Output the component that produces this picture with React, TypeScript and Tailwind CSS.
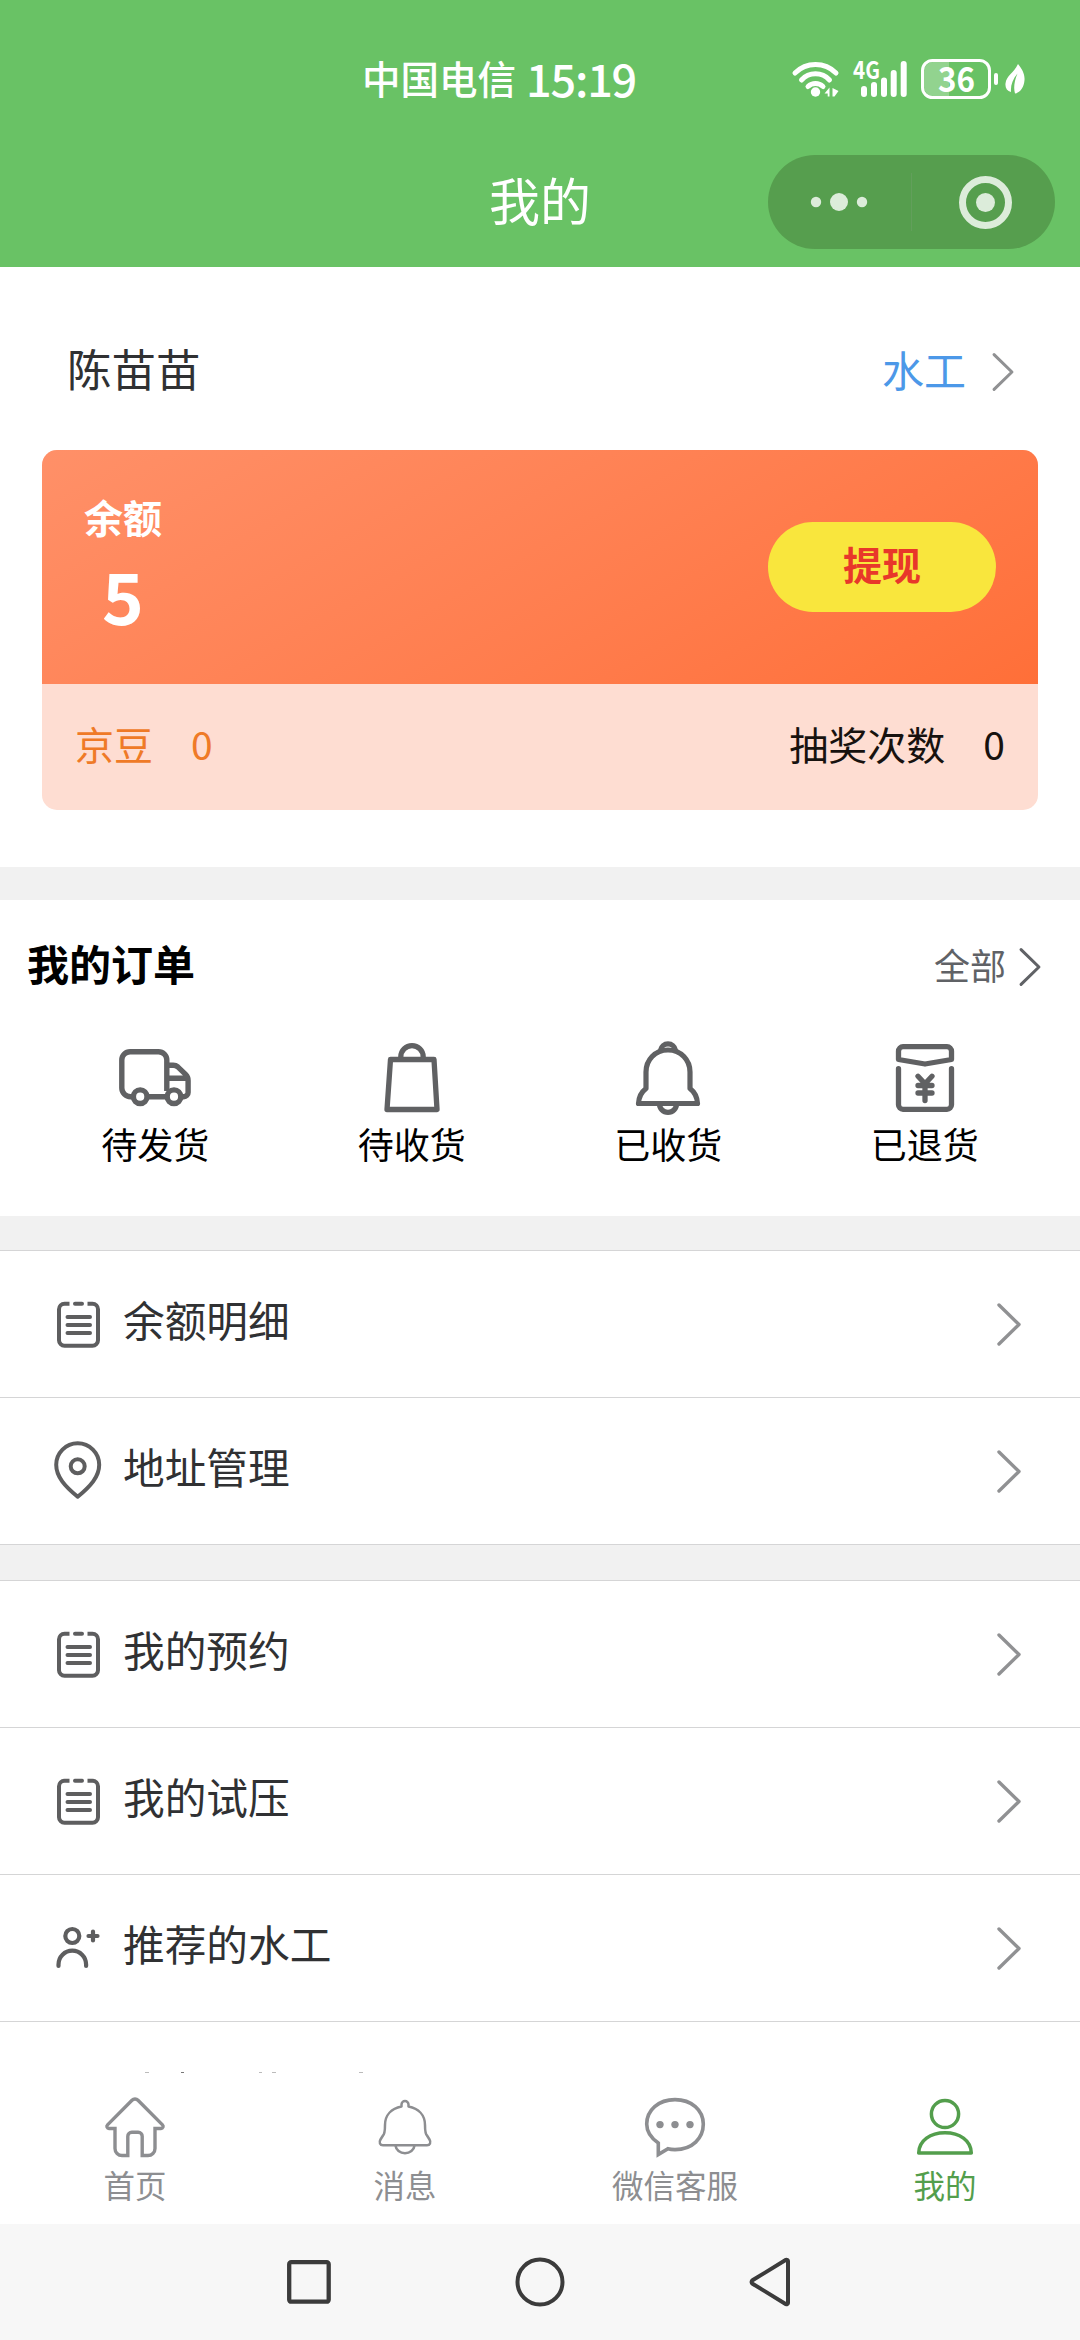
import type { ReactNode } from 'react';

type IconProps = { className?: string };

const orderTabs = [
  { label: '待发货', Icon: TruckIcon },
  { label: '待收货', Icon: BagIcon },
  { label: '已收货', Icon: OrderBellIcon },
  { label: '已退货', Icon: RefundIcon },
];

const accountLinks = [
  { label: '余额明细', Icon: NoteIcon },
  { label: '地址管理', Icon: PinIcon },
];

const serviceLinks = [
  { label: '我的预约', Icon: NoteIcon },
  { label: '我的试压', Icon: NoteIcon },
  { label: '推荐的水工', Icon: UserPlusIcon },
];

const tabs = [
  { label: '首页', Icon: HomeIcon, active: false },
  { label: '消息', Icon: BellIcon, active: false },
  { label: '微信客服', Icon: ChatIcon, active: false },
  { label: '我的', Icon: UserIcon, active: true },
];

export default function App() {
  return (
    <div className="flex h-[2340px] w-[1080px] flex-col overflow-hidden bg-white font-['Noto_Sans_CJK_SC',sans-serif] text-black">
      <header className="flex h-[267px] shrink-0 flex-col bg-[#69c265] text-white">
        <StatusBar />
        <TitleBar />
      </header>

      <main className="flex h-[1806px] shrink-0 flex-col overflow-hidden">
        <Profile />
        <div className="h-[33px] shrink-0 bg-[#f1f1f1]" />
        <Orders />
        <div className="h-[34px] shrink-0 bg-[#f1f1f1]" />
        <MenuGroup>
          {accountLinks.map(({ label, Icon }) => (
            <MenuRow key={label} label={label} icon={<Icon />} />
          ))}
        </MenuGroup>
        <div className="h-[35px] shrink-0 bg-[#f1f1f1]" />
        <MenuGroup>
          {serviceLinks.map(({ label, Icon }) => (
            <MenuRow key={label} label={label} icon={<Icon />} />
          ))}
        </MenuGroup>
        {/* Next row, cut off by the tab bar */}
        <svg className="mt-[50px] h-[1px] w-full shrink-0" viewBox="0 0 1080 1">
          <path d="M145 .5h4M259 .5h3M272 .5h4M359 .5h4" stroke="#bbb" />
          <path d="M181 .5h3" stroke="#777" />
        </svg>
      </main>

      <TabBar />
      <SystemNav />
    </div>
  );
}

function StatusBar() {
  return (
    <div className="flex h-[155px] shrink-0 pt-[50px]">
      <div className="ml-[362px] flex h-[54px] w-[418px] items-center gap-[10px] leading-none">
        <span className="text-[38.5px] font-medium">中国电信</span>
        <span className="text-[45px] font-medium tracking-[-1.2px]">15:19</span>
      </div>
      <svg className="h-[60px] w-[260px]" viewBox="780 50 260 60" fill="none" stroke="#fff" strokeLinecap="round">
        {/* wifi */}
        <path d="M795 73a29 29 0 0 1 41 0M801.500 80a19 19 0 0 1 28 0M808 86.500a11 11 0 0 1 15 0" strokeWidth="5" />
        <circle cx="815.500" cy="92" r="4.700" fill="#fff" stroke="none" />
        <path d="M824.500 93.500l5-6v9h-1.800v-3zM832.500 88l6 3-4 5.500h-2z" fill="#fff" stroke="none" />
        {/* signal */}
        <text x="853" y="79" fill="#fff" stroke="none" fontSize="24" fontWeight="700" textLength="27" lengthAdjust="spacingAndGlyphs">
          4G
        </text>
        <path d="M864 89v5M874 85v9M884 80.500v13.500M893.700 73v21M903.700 64v30" strokeWidth="6" />
        {/* battery */}
        <path d="M933 62h16v34h-16a9 9 0 0 1-9-9V71a9 9 0 0 1 9-9z" fill="#fff" fillOpacity=".28" stroke="none" />
        <rect x="922.500" y="60.500" width="67" height="37" rx="10" strokeWidth="3" />
        <text x="956.500" y="91.500" fill="#fff" stroke="none" fontSize="34" fontWeight="600" textAnchor="middle" textLength="37" lengthAdjust="spacingAndGlyphs">
          36
        </text>
        <path d="M996 75v8" strokeWidth="4" />
        {/* power saving leaf */}
        <path d="M1018 64c4 5 7 10 6.500 16-.5 7-4 12.500-9.500 13.500-1.500-5-1-12 2.500-20-5 6-7 12-6.500 18.500-4-1-6-4-5.500-8.500.8-8 8-10 12.500-19.500z" fill="#fff" stroke="none" />
      </svg>
    </div>
  );
}

function TitleBar() {
  return (
    <div className="grid h-[94px] grid-cols-[1fr_auto_1fr] items-center pr-[25px] pl-[25px]">
      <div />
      <h1 className="pb-[6px] text-[51px] leading-none">我的</h1>
      <div className="flex h-[94px] w-[287px] items-center justify-self-end rounded-full bg-[#569e4e]">
        <svg className="size-full" viewBox="768 155 287 94" fill="#dcecda">
          <circle cx="816" cy="202" r="5.200" />
          <circle cx="839" cy="202" r="9" />
          <circle cx="862" cy="202" r="5.200" />
          <path d="M911.500 173v58" stroke="#629f5b" />
          <circle cx="985.500" cy="202.500" r="23" fill="none" stroke="#dcecda" strokeWidth="7" />
          <circle cx="985.500" cy="202.500" r="9.500" />
        </svg>
      </div>
    </div>
  );
}

function Profile() {
  return (
    <section className="flex h-[600px] shrink-0 flex-col px-[42px]">
      <div className="flex h-[183px] shrink-0 items-center pt-[26px] pr-[23px] pl-[25px]">
        <span className="flex-1 pb-[6px] text-[44.5px] leading-none text-[#303133]">陈苗苗</span>
        <span className="mr-[25px] pb-[6px] text-[42px] leading-none text-[#4c98e8]">水工</span>
        <ChevronIcon className="h-[42px] w-[24px] text-[#909193]" />
      </div>

      <div className="flex h-[360px] shrink-0 flex-col overflow-hidden rounded-[15px] bg-[#feddd2]">
        <div className="flex h-[234px] items-center justify-between bg-linear-150 from-[#ff9068] to-[#ff6f38] pr-[42px] pl-[42px]">
          <div className="flex flex-col items-center font-bold text-white">
            <span className="text-[39px] leading-[54px]">余额</span>
            <span className="text-[71px] leading-[102px]">5</span>
          </div>
          <button className="h-[90px] w-[228px] rounded-full bg-[#f9e63d] pb-[7px] text-[39px] leading-none font-bold text-[#e8372a]">
            提现
          </button>
        </div>
        <div className="flex h-[126px] items-center justify-between px-[33px] pb-[7px] text-[39px] leading-none">
          <div className="flex gap-[38px] text-[#ef7a27]">
            <span>京豆</span>
            <span>0</span>
          </div>
          <div className="flex gap-[38px] text-[#17120f]">
            <span>抽奖次数</span>
            <span>0</span>
          </div>
        </div>
      </div>
    </section>
  );
}

function Orders() {
  return (
    <section className="flex h-[316px] shrink-0 flex-col px-[27px]">
      <div className="flex h-[132px] items-center justify-between">
        <h2 className="pb-[6px] text-[42px] leading-none font-bold">我的订单</h2>
        <div className="flex items-center gap-[12px] pt-[1px] pr-[11px] text-[#606266]">
          <span className="pb-[5px] text-[36px] leading-none">全部</span>
          <ChevronIcon className="h-[42px] w-[24px]" />
        </div>
      </div>
      <div className="grid grid-cols-4">
        {orderTabs.map(({ label, Icon }) => (
          <div key={label} className="flex flex-col items-center text-[#606163]">
            <Icon className="size-[90px]" />
            <span className="text-[36px] leading-[43px] text-black">{label}</span>
          </div>
        ))}
      </div>
    </section>
  );
}

function MenuGroup({ children }: { children: ReactNode }) {
  return <section className="shrink-0 border-t border-[#d5d5d6]">{children}</section>;
}

function MenuRow({ label, icon }: { label: string; icon: ReactNode }) {
  return (
    <div className="flex h-[147px] items-center border-b border-[#d5d5d6] pr-[58px] pl-[48px] text-[#5e5e5f]">
      {icon}
      <span className="ml-[15px] flex-1 pb-[9px] text-[41.7px] leading-none text-[#303133]">{label}</span>
      <ChevronIcon className="h-[47px] w-[26px] text-[#909193]" />
    </div>
  );
}

function TabBar() {
  return (
    <nav className="grid h-[151px] shrink-0 grid-cols-4 bg-white pt-[18px]">
      {tabs.map(({ label, Icon, active }) => (
        <div
          key={label}
          className={`flex flex-col items-center ${active ? 'text-[#539e4c]' : 'text-[#8d8e91]'}`}
        >
          <Icon className="size-[72px]" />
          <span className="text-[31.5px] leading-[43px]">{label}</span>
        </div>
      ))}
    </nav>
  );
}

function SystemNav() {
  return (
    <div className="flex h-[116px] shrink-0 items-center justify-center gap-[171px] bg-[#f7f7f7] text-[#3b3b3b]">
      <svg className="size-[60px]" viewBox="0 0 60 60" fill="none" stroke="currentColor" strokeWidth="4.300" strokeLinejoin="round">
        <rect x="10.200" y="10.200" width="39.500" height="39.500" rx="2" />
      </svg>
      <svg className="size-[60px]" viewBox="0 0 60 60" fill="none" stroke="currentColor" strokeWidth="4">
        <circle cx="30" cy="30" r="22.500" />
      </svg>
      <svg className="size-[60px]" viewBox="0 0 60 60" fill="none" stroke="currentColor" strokeWidth="4" strokeLinejoin="round">
        <path d="M47 9v42a1.500 1.500 0 0 1-2 1.200L11.500 31.700a2 2 0 0 1 0-3.400L45 7.800a1.500 1.500 0 0 1 2 1.200z" />
      </svg>
    </div>
  );
}

function ChevronIcon({ className }: IconProps) {
  return (
    <svg className={className} viewBox="0 0 26 47" fill="none" stroke="currentColor" strokeWidth="3.400" strokeLinecap="round" strokeLinejoin="round">
      <path d="M3 4l20 19.500L3 43" />
    </svg>
  );
}

function TruckIcon({ className }: IconProps) {
  return (
    <svg className={className} viewBox="0 0 90 90" fill="none" stroke="currentColor" strokeWidth="5.400">
      <path d="M23.500 64.700h-3a8.700 8.700 0 0 1-8.700-8.700V28a8.300 8.300 0 0 1 8.300-8.300h28.400a8.300 8.300 0 0 1 8.300 8.300v31M37 64.700h20" />
      <path d="M56.800 33.200h6.500a7 7 0 0 1 4.500 1.700l7.800 7.500a8 8 0 0 1 2.500 6v12a4.300 4.300 0 0 1-4.300 4.300h-2M56.800 46.200h21" />
      <circle cx="30.200" cy="64.700" r="6.800" />
      <circle cx="64" cy="64.700" r="6.800" />
    </svg>
  );
}

function BagIcon({ className }: IconProps) {
  return (
    <svg className={className} viewBox="0 0 90 90" fill="none" stroke="currentColor" strokeWidth="5.300" strokeLinejoin="round">
      <path d="M23.500 27.500h43.500l3 50H20zM33.800 27.500v-2.700a11.200 11.200 0 0 1 22.400 0v2.700" />
    </svg>
  );
}

function OrderBellIcon({ className }: IconProps) {
  return (
    <svg className={className} viewBox="0 0 90 90" fill="none" stroke="currentColor" strokeWidth="5.200" strokeLinejoin="round">
      <path d="M15.500 71.500h59c-.3-7-3-11.500-7.500-15V40c0-12-9-22-22-22s-22 10-22 22v16.500c-4.500 3.500-7.200 8-7.500 15z" />
      <path d="M37.500 18.200a7.600 7.600 0 0 1 15 0M36.400 71.800a8.600 8.600 0 0 0 17.200 0" />
    </svg>
  );
}

function RefundIcon({ className }: IconProps) {
  return (
    <svg className={className} viewBox="0 0 90 90" fill="none" stroke="currentColor" strokeWidth="5.300" strokeLinecap="round" strokeLinejoin="round">
      <path d="M18.500 27.500v-8.300a4.500 4.500 0 0 1 4.500-4.500h44a4.500 4.500 0 0 1 4.500 4.500v8.300L45 32zM18.500 36.700V72.800a4.500 4.500 0 0 0 4.500 4.500h44a4.500 4.500 0 0 0 4.500-4.500V36.700" />
      <path d="M38 44.200l7 7.500 7-7.500M38 53.500h14M38 61h14M45 53v15.500" />
    </svg>
  );
}

function NoteIcon() {
  return (
    <svg className="size-[60px]" viewBox="0 .8 60 60" fill="none" stroke="currentColor" strokeWidth="4">
      <path d="M21.500 10.500h-5a5.500 5.500 0 0 0-5.500 5.500v31a5.500 5.500 0 0 0 5.500 5.500h28a5.500 5.500 0 0 0 5.500-5.500V16a5.500 5.500 0 0 0-5.500-5.500h-5" />
      <path d="M27 10.500h7M19.500 23.800h22.500M19.500 31.800h22.500M19.500 39.800h22.500" strokeLinecap="round" />
    </svg>
  );
}

function PinIcon() {
  return (
    <svg className="size-[60px]" viewBox="0 1.200 60 60" fill="none" stroke="currentColor" strokeWidth="4" strokeLinejoin="round">
      <path d="M29.700 57C17 46.500 8.200 37 8.200 25a21.500 21.500 0 0 1 43 0c0 12-8.800 21.500-21.500 32z" />
      <circle cx="29.700" cy="26.500" r="7" />
    </svg>
  );
}

function UserPlusIcon() {
  return (
    <svg className="size-[60px]" viewBox="0 0 60 60" fill="none" stroke="currentColor" strokeWidth="4.200" strokeLinecap="round">
      <circle cx="24.300" cy="18" r="7" />
      <path d="M10.500 48v-1.500a13.800 13.800 0 0 1 27.600 0V48M40.500 18h9M45 13.500v9" />
    </svg>
  );
}

function HomeIcon({ className }: IconProps) {
  return (
    <svg className={className} viewBox="0 0 72 72" fill="none" stroke="currentColor" strokeWidth="3.400">
      <path d="M28.800 64.500H23a7 7 0 0 1-7-7V37.500h-6a2.100 2.100 0 0 1-1.500-3.600L33 9.200a4.200 4.200 0 0 1 6 0l24.500 24.700a2.100 2.100 0 0 1-1.500 3.600h-6v20a7 7 0 0 1-7 7h-5.800V45.300a4 4 0 0 0-4-4h-6.400a4 4 0 0 0-4 4z" />
    </svg>
  );
}

function BellIcon({ className }: IconProps) {
  return (
    <svg className={className} viewBox="0 0 72 72" fill="none" stroke="currentColor" strokeWidth="2.500" strokeLinejoin="round">
      <path d="M32.500 15.500v-2a3.500 3.500 0 0 1 7 0v2c10 2 16.500 8.500 16.500 18.500 0 6 .3 9 2 10.500l2.500 4c1.800 3 .5 5.800-2.500 5.800H14c-3 0-4.300-2.800-2.500-5.800l2.500-4c1.700-1.500 2-4.500 2-10.500 0-10 6.500-16.500 16.500-18.500z" />
      <path d="M26.500 54.500c.5 4.500 4.500 7.700 9.500 7.700s9-3.200 9.500-7.700" />
    </svg>
  );
}

function ChatIcon({ className }: IconProps) {
  return (
    <svg className={className} viewBox="0 .4 72 72" fill="none" stroke="currentColor" strokeWidth="3.600">
      <path d="M19.300 64V52.500C12 47.500 7.700 41.500 7.700 33.500 7.700 19.500 19.500 9 36 9s28.300 10.500 28.300 24.500S53.500 59 36 59c-2.500 0-4.500-.1-7-.8z" />
      <g fill="currentColor" stroke="none">
        <circle cx="21" cy="34" r="3.700" />
        <circle cx="36" cy="34" r="3.700" />
        <circle cx="51" cy="34" r="3.700" />
      </g>
    </svg>
  );
}

function UserIcon({ className }: IconProps) {
  return (
    <svg className={className} viewBox="0 0 72 72" fill="none" stroke="currentColor" strokeWidth="3.500" strokeLinejoin="round">
      <circle cx="36" cy="23" r="13.600" />
      <path d="M9.700 62h52.600C62 49.500 50.500 41.800 36 41.800S10 49.500 9.700 62z" />
    </svg>
  );
}
